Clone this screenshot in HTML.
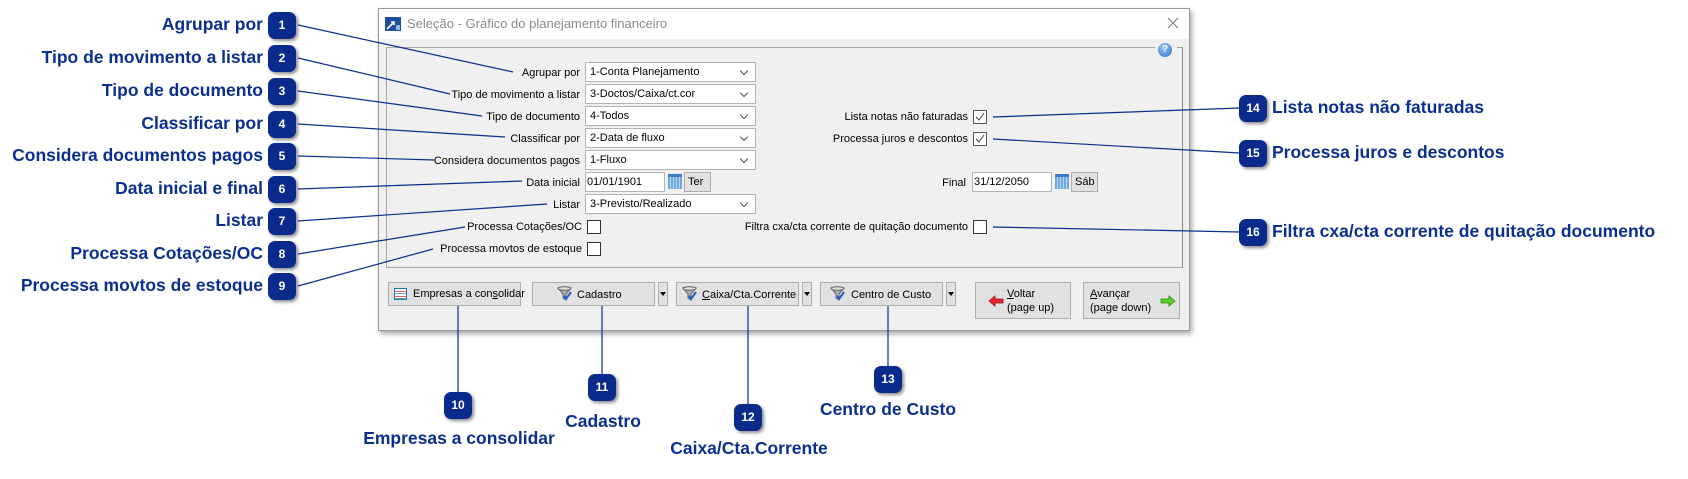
<!DOCTYPE html>
<html><head><meta charset="utf-8"><style>
*{margin:0;padding:0;box-sizing:border-box}
body{width:1688px;height:479px;background:#fff;position:relative;overflow:hidden;font-family:"Liberation Sans",sans-serif}
.a{position:absolute}
.lbl{position:absolute;font-size:11px;color:#000;white-space:nowrap;text-align:right;margin-top:2px}
.cb{position:absolute;height:20px;background:#fff;border:1px solid #b4b4b4;font-size:11px;padding:3px 0 0 4px;white-space:nowrap}
.cb:after{content:"";position:absolute;right:8px;top:5px;width:5px;height:5px;border-right:1px solid #555;border-bottom:1px solid #555;transform:rotate(45deg)}
.nodd:after{display:none}
.chk{position:absolute;width:14px;height:14px;border:1px solid #333;background:#fff}
.btn{position:absolute;background:#e1e1e1;border:1px solid #adadad;font-size:11px;white-space:nowrap;color:#000}
.badge{position:absolute;width:28px;height:27px;border-radius:7px;background:#0a2b8c;color:#fff;font-weight:bold;font-size:12px;text-align:center;line-height:27px;box-shadow:2px 2px 3px rgba(0,0,0,.45)}
.big{position:absolute;font-weight:bold;font-size:17.5px;color:#0b2f8f;white-space:nowrap}
.r{text-align:right}
.cal{position:absolute;width:14px;height:15px;background:repeating-linear-gradient(90deg,#6fa8dc 0 2px,#bcd8f2 2px 3px);border-top:3px solid #3d7cc9}
</style></head><body>

<div class="a" style="left:378px;top:8px;width:812px;height:323px;border:1px solid #9a9a9a;background:#f0f0f0;box-shadow:2px 3px 5px rgba(0,0,0,.35)"></div>
<div class="a" style="left:379px;top:9px;width:810px;height:30px;background:#fff"></div>
<svg class="a" style="left:385px;top:17px" width="16" height="14"><rect width="16" height="14" fill="#1f4e9c"/><path d="M2 12 L9 5 M6 5 H9 V8" stroke="#fff" stroke-width="1.6" fill="none"/><rect x="11" y="8" width="4" height="5" fill="#8fb6e6"/></svg>
<div class="a" style="left:407px;top:16px;font-size:13px;color:#8a8a8a">Seleção - Gráfico do planejamento financeiro</div>
<svg class="a" style="left:1167px;top:17px" width="12" height="12"><path d="M1 1 L11 11 M11 1 L1 11" stroke="#777" stroke-width="1"/></svg>
<div class="a" style="left:386px;top:47px;width:797px;height:221px;border:1px solid #a8a8a8;border-right-color:#888"></div>
<div class="a" style="left:1155px;top:42px;width:22px;height:14px;background:#f0f0f0"></div>
<div class="a" style="left:1158px;top:43px;width:14px;height:14px;border-radius:50%;background:radial-gradient(circle at 40% 35%,#9cc8f5,#2a6fc4);color:#fff;font-size:10px;font-weight:bold;text-align:center;line-height:14px">?</div>

<div class="lbl" style="right:1108px;top:65px">Agrupar por</div>
<div class="cb" style="left:585px;top:62px;width:171px">1-Conta Planejamento</div>
<div class="lbl" style="right:1108px;top:87px">Tipo de movimento a listar</div>
<div class="cb" style="left:585px;top:84px;width:171px">3-Doctos/Caixa/ct.cor</div>
<div class="lbl" style="right:1108px;top:109px">Tipo de documento</div>
<div class="cb" style="left:585px;top:106px;width:171px">4-Todos</div>
<div class="lbl" style="right:1108px;top:131px">Classificar por</div>
<div class="cb" style="left:585px;top:128px;width:171px">2-Data de fluxo</div>
<div class="lbl" style="right:1108px;top:153px">Considera documentos pagos</div>
<div class="cb" style="left:585px;top:150px;width:171px">1-Fluxo</div>
<div class="lbl" style="right:1108px;top:175px">Data inicial</div>
<div class="cb nodd" style="left:585px;top:172px;width:80px;padding-left:1px">01/01/1901</div>
<div class="cal" style="left:668px;top:174px"></div>
<div class="btn" style="left:684px;top:172px;width:27px;height:20px;padding:3px 0 0 3px">Ter</div>
<div class="lbl" style="right:1108px;top:197px">Listar</div>
<div class="cb" style="left:585px;top:194px;width:171px">3-Previsto/Realizado</div>
<div class="lbl" style="right:1106px;top:219px">Processa Cotações/OC</div>
<div class="chk" style="left:587px;top:220px"></div>
<div class="lbl" style="right:1106px;top:241px">Processa movtos de estoque</div>
<div class="chk" style="left:587px;top:242px"></div>

<div class="lbl" style="right:720px;top:109px">Lista notas não faturadas</div>
<div class="chk" style="left:973px;top:110px;border-color:#555"><svg width="12" height="12" style="position:absolute;left:0;top:0"><path d="M2 6 L5 9 L10 2" stroke="#444" fill="none"/></svg></div>
<div class="lbl" style="right:720px;top:131px">Processa juros e descontos</div>
<div class="chk" style="left:973px;top:132px;border-color:#555"><svg width="12" height="12" style="position:absolute;left:0;top:0"><path d="M2 6 L5 9 L10 2" stroke="#444" fill="none"/></svg></div>
<div class="lbl" style="right:722px;top:175px">Final</div>
<div class="cb nodd" style="left:972px;top:172px;width:80px;padding-left:1px">31/12/2050</div>
<div class="cal" style="left:1055px;top:174px"></div>
<div class="btn" style="left:1071px;top:172px;width:27px;height:20px;padding:3px 0 0 3px">Sáb</div>
<div class="lbl" style="right:720px;top:219px">Filtra cxa/cta corrente de quitação documento</div>
<div class="chk" style="left:973px;top:220px"></div>

<div class="btn" style="left:388px;top:282px;width:133px;height:24px;padding:5px 0 0 24px">Empresas a con<u>s</u>olidar
<div class="a" style="left:5px;top:5px;width:13px;height:12px;border:1px solid #2a6fc4;background:repeating-linear-gradient(#fff 0 2px,#e66 2px 3px,#fff 3px 4px,#6a9 4px 5px)"></div></div>
<svg width="0" height="0" style="position:absolute"><defs><g id="fn"><path d="M1 2 H14 L9 8 V14 L6 12 V8 Z" fill="#aaa" stroke="#666"/><ellipse cx="7.5" cy="2.5" rx="6.5" ry="1.8" fill="#ddd" stroke="#666"/><path d="M7 10 L9 13 L14 6" stroke="#1d5fc2" stroke-width="2" fill="none"/></g></defs></svg>
<div class="btn" style="left:532px;top:282px;width:123px;height:24px;padding:6px 0 0 44px"><svg class="a" style="left:24px;top:3px" width="16" height="16"><use href="#fn"/></svg>Cadastro</div>
<div class="btn" style="left:658px;top:282px;width:10px;height:24px"><div class="a" style="left:1px;top:9px;border:3px solid transparent;border-top:4px solid #000"></div></div>
<div class="btn" style="left:676px;top:282px;width:123px;height:24px;padding:6px 0 0 25px"><svg class="a" style="left:5px;top:3px" width="16" height="16"><use href="#fn"/></svg><u>C</u>aixa/Cta.Corrente</div>
<div class="btn" style="left:802px;top:282px;width:10px;height:24px"><div class="a" style="left:1px;top:9px;border:3px solid transparent;border-top:4px solid #000"></div></div>
<div class="btn" style="left:820px;top:282px;width:123px;height:24px;padding:6px 0 0 30px"><svg class="a" style="left:9px;top:3px" width="16" height="16"><use href="#fn"/></svg>Centro de Custo</div>
<div class="btn" style="left:946px;top:282px;width:10px;height:24px"><div class="a" style="left:1px;top:9px;border:3px solid transparent;border-top:4px solid #000"></div></div>
<div class="btn" style="left:975px;top:282px;width:96px;height:37px;padding:4px 0 0 31px;line-height:14px"><svg class="a" style="left:12px;top:12px" width="16" height="12"><path d="M1 6 L7 1 V4 H15 V8 H7 V11 Z" fill="#e8282e" stroke="#a01010" stroke-width=".8"/></svg><u>V</u>oltar<br>(page up)</div>
<div class="btn" style="left:1083px;top:282px;width:97px;height:37px;padding:4px 0 0 6px;line-height:14px"><svg class="a" style="left:76px;top:12px" width="16" height="12"><path d="M15 6 L9 1 V4 H1 V8 H9 V11 Z" fill="#5ccf2e" stroke="#2d8a10" stroke-width=".8"/></svg><u>A</u>vançar<br>(page down)</div>

<svg class="a" style="left:0;top:0" width="1688" height="479">
<g stroke="#0b2f8f" stroke-width="1.2" fill="none">
<path d="M298 25 L513 72"/><path d="M298 58 L450 94"/><path d="M298 91 L482 116"/><path d="M298 124 L505 137"/>
<path d="M298 156 L435 160"/><path d="M298 189 L522 181"/><path d="M298 221 L547 204"/><path d="M298 254 L465 227"/>
<path d="M298 286 L433 249"/>
<path d="M993 117 L1240 108"/><path d="M993 139 L1240 153"/><path d="M993 227 L1240 232"/>
<path d="M458 306 V396"/><path d="M602 306 V378"/><path d="M748 306 V406"/><path d="M888 306 V370"/>
</g></svg>

<div class="big r" style="right:1425px;top:14px">Agrupar por</div><div class="badge" style="left:268px;top:12px">1</div>
<div class="big r" style="right:1425px;top:47px">Tipo de movimento a listar</div><div class="badge" style="left:268px;top:45px">2</div>
<div class="big r" style="right:1425px;top:80px">Tipo de documento</div><div class="badge" style="left:268px;top:78px">3</div>
<div class="big r" style="right:1425px;top:113px">Classificar por</div><div class="badge" style="left:268px;top:111px">4</div>
<div class="big r" style="right:1425px;top:145px">Considera documentos pagos</div><div class="badge" style="left:268px;top:143px">5</div>
<div class="big r" style="right:1425px;top:178px">Data inicial e final</div><div class="badge" style="left:268px;top:176px">6</div>
<div class="big r" style="right:1425px;top:210px">Listar</div><div class="badge" style="left:268px;top:208px">7</div>
<div class="big r" style="right:1425px;top:243px">Processa Cotações/OC</div><div class="badge" style="left:268px;top:241px">8</div>
<div class="big r" style="right:1425px;top:275px">Processa movtos de estoque</div><div class="badge" style="left:268px;top:273px">9</div>

<div class="badge" style="left:1239px;top:95px">14</div><div class="big" style="left:1272px;top:97px">Lista notas não faturadas</div>
<div class="badge" style="left:1239px;top:140px">15</div><div class="big" style="left:1272px;top:142px">Processa juros e descontos</div>
<div class="badge" style="left:1239px;top:219px">16</div><div class="big" style="left:1272px;top:221px">Filtra cxa/cta corrente de quitação documento</div>

<div class="badge" style="left:444px;top:392px">10</div>
<div class="big" style="left:459px;top:428px;transform:translateX(-50%)">Empresas a consolidar</div>
<div class="badge" style="left:588px;top:374px">11</div>
<div class="big" style="left:603px;top:411px;transform:translateX(-50%)">Cadastro</div>
<div class="badge" style="left:734px;top:404px">12</div>
<div class="big" style="left:749px;top:438px;transform:translateX(-50%)">Caixa/Cta.Corrente</div>
<div class="badge" style="left:874px;top:366px">13</div>
<div class="big" style="left:888px;top:399px;transform:translateX(-50%)">Centro de Custo</div>
</body></html>
